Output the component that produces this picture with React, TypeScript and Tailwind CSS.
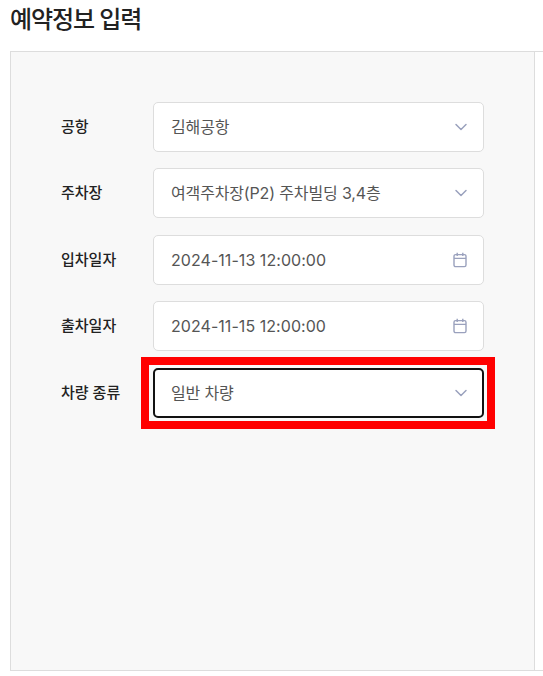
import { ChevronDown } from "lucide-react";

const rows = [
  { label: "공항", value: "김해공항", icon: "select", gap: "" },
  { label: "주차장", value: "여객주차장(P2) 주차빌딩 3,4층", icon: "select", gap: "mt-[16px]" },
  { label: "입차일자", value: "2024-11-13 12:00:00", icon: "date", gap: "mt-[17px]" },
  { label: "출차일자", value: "2024-11-15 12:00:00", icon: "date", gap: "mt-[16px]" },
];

function CalendarIcon() {
  return (
    <svg width="14" height="16" viewBox="0 0 14 16" fill="none" stroke="#9aa1bd" strokeWidth="1.4">
      <rect x="1" y="2.6" width="12" height="12" rx="1.6" />
      <path d="M1 6.4H13M4.2 .8V4M9.8 .8V4" />
    </svg>
  );
}

function Field({ value, icon, active }: { value: string; icon: string; active?: boolean }) {
  return (
    <div
      className={
        "flex h-[50px] w-[331px] items-center justify-between rounded-[5px] bg-white " +
        (active
          ? "border-2 border-[#111111] pl-[16px] pr-[11px]"
          : "border border-[#dddddd] pl-[17px] " + (icon === "date" ? "pr-[16px]" : "pr-[12px]"))
      }
    >
      <span className={"text-[16px] text-[#555555] " + (icon === "date" ? "tracking-[0.05px]" : "tracking-[-0.15px]")}>
        {value}
      </span>
      {icon === "date" ? <CalendarIcon /> : <ChevronDown className="size-[20px] text-[#9aa1bd]" strokeWidth={1.8} />}
    </div>
  );
}

export default function App() {
  return (
    <div className="h-[676px] w-[543px] overflow-hidden bg-white font-['Inter','Noto_Sans_CJK_KR',sans-serif]">
      <h1 className="h-[51px] pl-[10px] pt-[2px] text-[24px] leading-[36px] font-medium tracking-[-1.1px] text-[#222222]">
        예약정보 입력
      </h1>
      <div className="ml-[10px] h-[620px] border-y border-l border-[#dddddd]">
        <div className="h-full w-[524px] border-r border-[#dddddd] bg-[#f8f8f8] pt-[50px]">
          {rows.map((row) => (
            <div key={row.label} className={`flex items-center ${row.gap}`}>
              <span className="w-[142px] pl-[50px] text-[15px] font-medium text-[#222222]">{row.label}</span>
              <Field value={row.value} icon={row.icon} />
            </div>
          ))}
          <div className="mt-[17px] flex items-center">
            <span className="w-[142px] pl-[50px] text-[15px] font-medium text-[#222222]">차량 종류</span>
            <div className="relative">
              <Field value="일반 차량" icon="select" active />
              <div className="absolute -top-[11px] -right-[11px] -bottom-[11px] -left-[12px] border-[8px] border-[#ff0000]" />
            </div>
          </div>
        </div>
      </div>
    </div>
  );
}
